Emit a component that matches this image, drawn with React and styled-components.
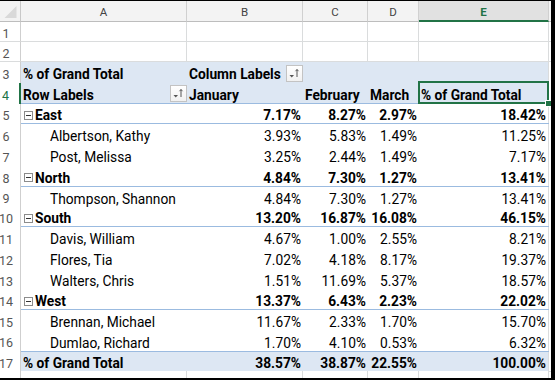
import React from 'react';
import styled, { createGlobalStyle } from 'styled-components';

const GlobalStyle = createGlobalStyle`
  html, body { margin: 0; padding: 0; background: #fff; }
  body { font-family: Roboto, "Liberation Sans", sans-serif; }
`;

const GREEN = '#217346';
const GRID = '#dadcdd';
const RULE = '#9bbbe0';
const FILL = '#dde7f3';

const Frame = styled.div`
  width: 555px;
  height: 380px;
  box-sizing: border-box;
  border-top: 1px solid #000;
  border-right: 4px solid #000;
  border-bottom: 2px solid #000;
  overflow: hidden;
  background: #fff;
  font-family: Roboto, "Liberation Sans", sans-serif;
  font-size: 13.75px;
  color: #000;
`;

const Row = styled.div`
  display: grid;
  grid-template-columns: 21px 528px 1fr;
  height: ${p => p.$h}px;
`;

const Corner = styled.div`
  box-sizing: border-box;
  background: #f3f3f3;
  border-right: 1px solid #c8c8c8;
  border-bottom: 1px solid #bdbdbd;
  display: flex;
`;

const HeadBand = styled.div`
  display: grid;
  grid-template-columns: 166px 116px 65px 51px 130px;
`;

const ColHead = styled.div`
  box-sizing: border-box;
  display: flex;
  align-items: center;
  justify-content: center;
  padding-top: 2px;
  font-size: 11.5px;
  font-weight: ${p => (p.$active ? 700 : 400)};
  color: ${p => (p.$active ? GREEN : '#444')};
  background: ${p => (p.$active ? '#e1e1e1' : '#f3f3f3')};
  border-right: 1px solid #d0d0d0;
  border-bottom: ${p => (p.$active ? `2px solid ${GREEN}` : '1px solid #bdbdbd')};
`;

const HeadTail = styled.div`
  background: #f3f3f3;
  border-bottom: 1px solid #bdbdbd;
`;

const RowNum = styled.div`
  box-sizing: border-box;
  display: flex;
  align-items: center;
  justify-content: center;
  padding: 3px 8px 0 0;
  font-size: 12.5px;
  color: ${p => (p.$active ? GREEN : '#555')};
  border-right: ${p => (p.$active ? `2px solid ${GREEN}` : '1px solid #cfcfcf')};
  border-bottom: ${p => (p.$grid ? `1px solid ${GRID}` : 'none')};
`;

const Band = styled.div`
  box-sizing: border-box;
  display: grid;
  grid-template-columns: 166px 116px 65px 51px 130px;
  background: ${p => (p.$fill ? FILL : '#fff')};
  border-top: ${p => (p.$top ? `1px solid ${RULE}` : 'none')};
  border-bottom: ${p => (p.$rule ? `1px solid ${RULE}` : p.$grid ? `1px solid ${GRID}` : 'none')};
`;

const Cell = styled.div`
  box-sizing: border-box;
  position: relative;
  display: flex;
  align-items: center;
  justify-content: ${p => (p.$right ? 'flex-end' : 'flex-start')};
  padding: 3px 2px 0 ${p => p.$indent ?? 2}px;
  border-right: ${p => (p.$line ? `1px solid ${GRID}` : 'none')};
  font-weight: ${p => (p.$bold ? 700 : 400)};
  white-space: nowrap;
  min-width: 0;
`;

const Tail = styled.div`
  border-bottom: ${p => (p.$grid ? `1px solid ${GRID}` : 'none')};
`;

const FilterBtn = styled.span`
  box-sizing: border-box;
  width: 17px;
  height: 17px;
  margin-left: auto;
  margin-right: -2px;
  margin-top: -2px;
  border: 1px solid #c3c3c3;
  background: linear-gradient(#ffffff, #f1f1f1);
  display: flex;
  align-items: center;
  justify-content: center;
  flex: none;
`;

const ToggleIcon = styled.svg`
  flex: none;
  margin: 0 2px 0 3px;
`;

const Selection = styled.div`
  position: absolute;
  top: -2px;
  left: -1px;
  right: -1px;
  bottom: -1px;
  border: 2px solid ${GREEN};
  z-index: 2;
  pointer-events: none;
`;

const Handle = styled.div`
  position: absolute;
  right: -4px;
  bottom: -4px;
  width: 5px;
  height: 5px;
  background: ${GREEN};
  box-shadow: 0 0 0 1px #fff;
`;

const Filter = () => (
  <FilterBtn>
    <svg width="13" height="13" viewBox="0 0 13 13">
      <polygon points="1.5,8 6,8 3.75,10.5" fill="#555" />
      <line x1="9" y1="2.5" x2="9" y2="10" stroke="#555" strokeWidth="1" />
      <polyline points="7.5,4.2 9,2.5 10.5,4.2" fill="none" stroke="#555" strokeWidth="1" />
    </svg>
  </FilterBtn>
);

const Toggle = () => (
  <ToggleIcon width="9" height="9" viewBox="0 0 9 9">
    <rect x="0.5" y="0.5" width="8" height="8" fill="#fff" stroke="#8c8c8c" />
    <line x1="2" y1="4.5" x2="7" y2="4.5" stroke="#333" strokeWidth="1" />
  </ToggleIcon>
);

const body = [
  { n: 5, h: 20, label: 'East', group: true, v: ['7.17%', '8.27%', '2.97%', '18.42%'] },
  { n: 6, h: 21, label: 'Albertson, Kathy', v: ['3.93%', '5.83%', '1.49%', '11.25%'] },
  { n: 7, h: 21, label: 'Post, Melissa', v: ['3.25%', '2.44%', '1.49%', '7.17%'] },
  { n: 8, h: 21, label: 'North', group: true, v: ['4.84%', '7.30%', '1.27%', '13.41%'] },
  { n: 9, h: 20, label: 'Thompson, Shannon', v: ['4.84%', '7.30%', '1.27%', '13.41%'] },
  { n: 10, h: 20, label: 'South', group: true, v: ['13.20%', '16.87%', '16.08%', '46.15%'] },
  { n: 11, h: 21, label: 'Davis, William', v: ['4.67%', '1.00%', '2.55%', '8.21%'] },
  { n: 12, h: 21, label: 'Flores, Tia', v: ['7.02%', '4.18%', '8.17%', '19.37%'] },
  { n: 13, h: 21, label: 'Walters, Chris', v: ['1.51%', '11.69%', '5.37%', '18.57%'] },
  { n: 14, h: 20, label: 'West', group: true, v: ['13.37%', '6.43%', '2.23%', '22.02%'] },
  { n: 15, h: 21, label: 'Brennan, Michael', v: ['11.67%', '2.33%', '1.70%', '15.70%'] },
  { n: 16, h: 20, label: 'Dumlao, Richard', v: ['1.70%', '4.10%', '0.53%', '6.32%'] },
];

const GridRow = ({ n, h, grid = true }) => (
  <Row $h={h}>
    <RowNum $grid={grid}>{n}</RowNum>
    <Band $grid={grid}>
      {[0, 1, 2, 3, 4].map(i => <Cell key={i} $line />)}
    </Band>
    <Tail $grid={grid} />
  </Row>
);

export default function App() {
  return (
    <>
      <GlobalStyle />
      <Frame>
        <Row $h={21}>
          <Corner>
            <svg width="20" height="20" viewBox="0 0 20 20">
              <polygon points="16.5,5 16.5,17 4.5,17" fill="#d9d9d9" />
            </svg>
          </Corner>
          <HeadBand>
            <ColHead>A</ColHead>
            <ColHead>B</ColHead>
            <ColHead>C</ColHead>
            <ColHead>D</ColHead>
            <ColHead $active>E</ColHead>
          </HeadBand>
          <HeadTail />
        </Row>

        <GridRow n={1} h={20} />
        <GridRow n={2} h={20} />

        <Row $h={21}>
          <RowNum>3</RowNum>
          <Band $fill>
            <Cell $bold>% of Grand Total</Cell>
            <Cell $bold>
              Column Labels
              <Filter />
            </Cell>
            <Cell />
            <Cell />
            <Cell $line />
          </Band>
          <Tail />
        </Row>

        <Row $h={21}>
          <RowNum $active>4</RowNum>
          <Band $fill $rule>
            <Cell $bold>
              Row Labels
              <Filter />
            </Cell>
            <Cell $bold>January</Cell>
            <Cell $bold>February</Cell>
            <Cell $bold>March</Cell>
            <Cell $bold $line>
              % of Grand Total
              <Selection>
                <Handle />
              </Selection>
            </Cell>
          </Band>
          <Tail />
        </Row>

        {body.map(r => (
          <Row key={r.n} $h={r.h}>
            <RowNum>{r.n}</RowNum>
            <Band $rule={r.group}>
              {r.group ? (
                <Cell $bold $indent={0}>
                  <Toggle />
                  {r.label}
                </Cell>
              ) : (
                <Cell $indent={29}>{r.label}</Cell>
              )}
              {r.v.map((x, i) => (
                <Cell key={i} $right $bold={r.group} $line={i === 3}>
                  {x}
                </Cell>
              ))}
            </Band>
            <Tail />
          </Row>
        ))}

        <Row $h={20}>
          <RowNum>17</RowNum>
          <Band $fill $top $grid>
            <Cell $bold>% of Grand Total</Cell>
            <Cell $bold $right>38.57%</Cell>
            <Cell $bold $right>38.87%</Cell>
            <Cell $bold $right>22.55%</Cell>
            <Cell $bold $right $line>100.00%</Cell>
          </Band>
          <Tail $grid />
        </Row>

        <GridRow n="" h={7} grid={false} />
      </Frame>
    </>
  );
}
